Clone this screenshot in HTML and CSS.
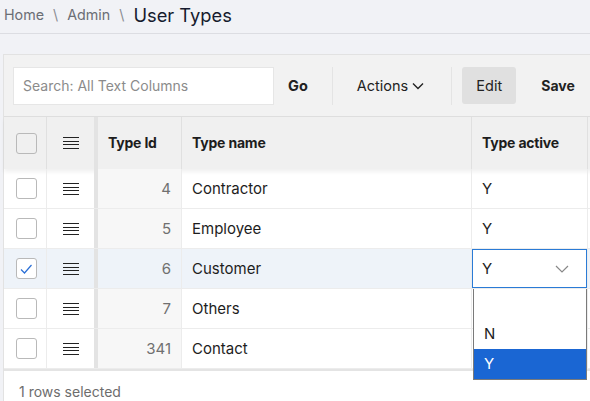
FILE: index.html
```html
<!DOCTYPE html>
<html lang="en">
<head>
  <meta charset="UTF-8" />
  <meta name="viewport" content="width=device-width, initial-scale=1.0" />
  <title>User Types</title>
  <link rel="stylesheet" href="styles.css">
</head>
<body>
  <div class="crumbs">
    <span class="crumb">Home</span>
    <span class="sep">\</span>
    <span class="crumb">Admin</span>
    <span class="sep">\</span>
    <h1>User Types</h1>
  </div>

  <div class="region">
    <div class="toolbar">
      <input type="text" class="search" placeholder="Search: All Text Columns" />
      <button class="btn bold go">Go</button>
      <span class="divider first"></span>
      <button class="btn actions">Actions
        <svg width="12" height="8" viewBox="0 0 12 8"><path d="M1 1.5 L6 6.5 L11 1.5" fill="none" stroke="#222" stroke-width="1.4"/></svg>
      </button>
      <span class="divider"></span>
      <button class="btn edit">Edit</button>
      <button class="btn bold save">Save</button>
    </div>

    <div class="grid">
      <div class="row head">
        <div class="cell sel"><span class="box"></span></div>
        <div class="cell menu"><span class="burger"></span></div>
        <div class="cell freeze"></div>
        <div class="cell th">Type Id</div>
        <div class="cell th">Type name</div>
        <div class="cell th">Type active</div>
        <div class="cell th"></div>
      </div>

      <div class="row">
        <div class="cell sel"><span class="box"></span></div>
        <div class="cell menu"><span class="burger"></span></div>
        <div class="cell freeze"></div>
        <div class="cell num">4</div>
        <div class="cell">Contractor</div>
        <div class="cell">Y</div>
        <div class="cell"></div>
      </div>
      <div class="row">
        <div class="cell sel"><span class="box"></span></div>
        <div class="cell menu"><span class="burger"></span></div>
        <div class="cell freeze"></div>
        <div class="cell num">5</div>
        <div class="cell">Employee</div>
        <div class="cell">Y</div>
        <div class="cell"></div>
      </div>
      <div class="row picked">
        <div class="cell sel"><span class="box checked">
          <svg width="14" height="12" viewBox="0 0 14 12"><path d="M2 6.5 L5.5 10 L12.5 2" fill="none" stroke="#2a6fd6" stroke-width="1.2"/></svg>
        </span></div>
        <div class="cell menu"><span class="burger"></span></div>
        <div class="cell freeze"></div>
        <div class="cell num">6</div>
        <div class="cell">Customer</div>
        <div class="cell editing">
          <div class="select">
            <span>Y</span>
            <svg width="14" height="8" viewBox="0 0 14 8"><path d="M1 1 L7 7 L13 1" fill="none" stroke="#888" stroke-width="1.2"/></svg>
          </div>
          <ul class="options">
            <li></li>
            <li>N</li>
            <li class="hl">Y</li>
          </ul>
        </div>
        <div class="cell"></div>
      </div>
      <div class="row">
        <div class="cell sel"><span class="box"></span></div>
        <div class="cell menu"><span class="burger"></span></div>
        <div class="cell freeze"></div>
        <div class="cell num">7</div>
        <div class="cell">Others</div>
        <div class="cell"></div>
        <div class="cell"></div>
      </div>
      <div class="row">
        <div class="cell sel"><span class="box"></span></div>
        <div class="cell menu"><span class="burger"></span></div>
        <div class="cell freeze"></div>
        <div class="cell num">341</div>
        <div class="cell">Contact</div>
        <div class="cell"></div>
        <div class="cell"></div>
      </div>
    </div>

    <div class="footer">1 rows selected</div>
  </div>
</body>
</html>
```

FILE: styles.css
```css
body {
  font-family: Inter, "Liberation Sans", sans-serif;
  background-color: #f1f2f6;
  color: #1d1d1d;
  margin: 0;
  overflow: hidden;
}
.crumbs {
  height: 34px;
  border-bottom: 1px solid #dcdde2;
  display: flex;
  align-items: center;
  padding: 0 0 4px 4px;
  gap: 9px;
  box-sizing: border-box;
}
.crumb {
  font-size: 14.3px;
  color: #6b6e75;
}
.sep {
  font-size: 14.3px;
  color: #8a8d93;
}
h1 {
  margin: 0;
  font-size: 18.3px;
  font-weight: 400;
  color: #161b2e;
}
.region {
  margin: 20px 0 0 3px;
  width: 640px;
  border: 1px solid #e2e2e2;
  background: #f2f2f2;
}
.toolbar {
  display: flex;
  align-items: center;
  height: 62px;
  padding: 0 0 0 9px;
  border-bottom: 1px solid #dedede;
  box-sizing: border-box;
}
.search {
  width: 261px;
  height: 38px;
  box-sizing: border-box;
  border: 1px solid #e6e6e6;
  background: #fff;
  padding: 0 9px;
  font-family: inherit;
  font-size: 14px;
}
.search::placeholder {
  color: #8b8b8b;
}
.btn {
  border: none;
  background: none;
  font-family: inherit;
  font-size: 14.5px;
  color: #222;
  padding: 0;
  height: 37px;
  border-radius: 3px;
  display: flex;
  align-items: center;
}
.bold {
  font-weight: 700;
}
.go {
  margin-left: 14px;
}
.divider {
  width: 1px;
  height: 38px;
  background: #e4e4e4;
}
.divider.first {
  margin-left: 24px;
}
.actions {
  margin: 0 27px 0 24px;
  gap: 4px;
}
.edit {
  margin-left: 10px;
  width: 54px;
  justify-content: center;
  background: #e0e0e0;
}
.save {
  margin-left: 25px;
  font-size: 14px;
}
.grid {
  background: #fff;
}
.row {
  display: grid;
  grid-template-columns: 43px 47px 4px 84px 290px 116px 1fr;
  height: 40px;
  box-sizing: border-box;
  border-bottom: 1px solid #ececec;
}
.row.head {
  height: 52px;
  background: #f0f0f0;
  border-bottom: none;
  box-shadow: 0 3px 4px rgba(0,0,0,0.06);
  position: relative;
}
.row.picked {
  background: #eef3f9;
}
.cell {
  display: flex;
  align-items: center;
  padding: 0 10px;
  font-size: 15px;
  border-right: 1px solid #ececec;
  position: relative;
}
.head .cell {
  border-right-color: #e0e0e0;
}
.th {
  font-size: 14px;
  font-weight: 700;
  letter-spacing: -0.2px;
  padding-bottom: 2px;
}
.sel, .menu {
  justify-content: center;
  padding: 0;
}
.sel {
  padding-left: 2px;
}
.menu {
  border-right: none;
}
.freeze {
  padding: 0;
  background: #e3e3e3;
  border-right: none;
}
.num {
  justify-content: flex-end;
  color: #707070;
  background: #f7f7f7;
}
.picked .num {
  background: #eef3f9;
}
.box {
  width: 19px;
  height: 19px;
  border: 1px solid #b9b9b9;
  border-radius: 3px;
  background: #fff;
  display: flex;
  align-items: center;
  justify-content: center;
}
.head .box {
  background: #f0f0f0;
}
.burger {
  width: 16px;
  height: 10px;
  border-top: 1.5px solid #222;
  border-bottom: 1.5px solid #222;
  background: linear-gradient(#222, #222) 0 3px / 100% 1.3px no-repeat,
              linear-gradient(#222, #222) 0 6px / 100% 1.3px no-repeat;
}
.editing {
  padding: 0;
}
.select {
  flex: 1;
  height: 39px;
  box-sizing: border-box;
  border: 1.5px solid #2a7bd6;
  background: #fff;
  display: flex;
  align-items: center;
  justify-content: space-between;
  padding: 0 17px 0 9px;
}
.options {
  position: absolute;
  top: 40px;
  left: 1px;
  right: 0;
  margin: 0;
  padding: 0;
  list-style: none;
  background: #fff;
  border: 1px solid #7a7a7a;
  border-top: none;
  z-index: 5;
}
.options li {
  height: 30px;
  line-height: 30px;
  padding-left: 10px;
  font-size: 15px;
}
.options li.hl {
  background: #1a66d3;
  color: #fff;
}
.footer {
  height: 40px;
  box-sizing: border-box;
  background: #fff;
  border-top: 2px solid #e4e4e4;
  padding: 12px 0 0 15px;
  font-size: 14px;
  color: #6d6d6d;
}
```
